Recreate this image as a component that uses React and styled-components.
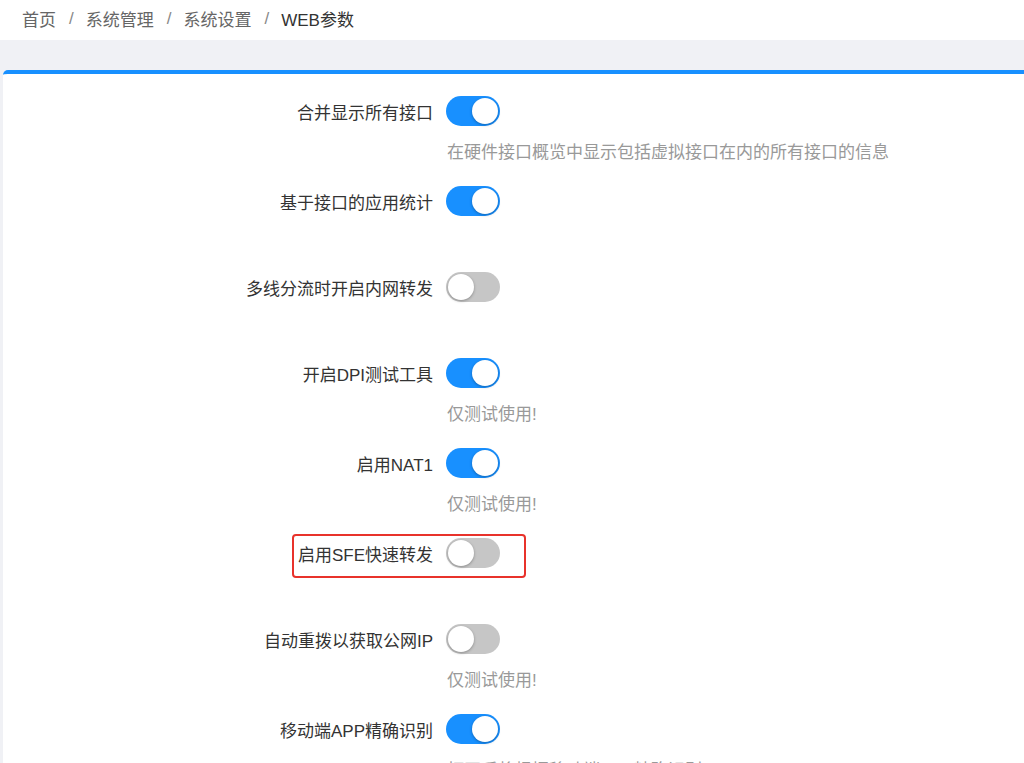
import React, { useState } from "react";
import styled, { createGlobalStyle } from "styled-components";

const GlobalStyle = createGlobalStyle`
  html, body {
    margin: 0;
    padding: 0;
    background: #f0f1f5;
    font-family: "Liberation Sans", "Noto Sans CJK SC", sans-serif;
    overflow: hidden;
  }
`;

const settings = [
    { label: "合并显示所有接口", on: true, hint: "在硬件接口概览中显示包括虚拟接口在内的所有接口的信息" },
    { label: "基于接口的应用统计", on: true },
    { label: "多线分流时开启内网转发", on: false },
    { label: "开启DPI测试工具", on: true, hint: "仅测试使用!" },
    { label: "启用NAT1", on: true, hint: "仅测试使用!" },
    { label: "启用SFE快速转发", on: false, marked: true },
    { label: "自动重拨以获取公网IP", on: false, hint: "仅测试使用!" },
    { label: "移动端APP精确识别", on: true, hint: "打开后将根据移动端APP精确识别" }
];

const crumbs = ["首页", "系统管理", "系统设置", "WEB参数"];

export default function App() {
    const [values, setValues] = useState(settings.map((s) => s.on));
    const toggle = (i) => setValues(values.map((v, j) => (j === i ? !v : v)));

    return (
        <Page>
            <GlobalStyle />
            <Breadcrumb>
                {crumbs.map((c, i) => (
                    <React.Fragment key={c}>
                        {i > 0 && <Sep>/</Sep>}
                        <Crumb last={i === crumbs.length - 1}>{c}</Crumb>
                    </React.Fragment>
                ))}
            </Breadcrumb>
            <Body>
                <Card>
                    {settings.map((s, i) => (
                        <Item key={s.label}>
                            <Control marked={s.marked}>
                                <Label>{s.label}</Label>
                                <Switch on={values[i]} onClick={() => toggle(i)}>
                                    <Knob on={values[i]} />
                                </Switch>
                            </Control>
                            {s.hint ? <Hint>{s.hint}</Hint> : <Spacer />}
                        </Item>
                    ))}
                </Card>
            </Body>
        </Page>
    );
}

const Page = styled.div`
    min-height: 763px;
    display: flex;
    flex-direction: column;
`;

const Breadcrumb = styled.div`
    height: 40px;
    background: #fff;
    display: flex;
    align-items: center;
    padding: 0 0 3px 22px;
    box-sizing: border-box;
    font-size: 17px;
    color: #666;
`;

const Crumb = styled.span`
    color: ${({ last }) => (last ? "#333" : "#666")};
`;

const Sep = styled.span`
    margin: 0 12px 0 13px;
    color: #888;
`;

const Body = styled.div`
    flex: 1;
    padding: 30px 0 0 3px;
    display: flex;
`;

const Card = styled.div`
    flex: 1;
    background: #fff;
    border-top: 4px solid #1890ff;
    border-radius: 5px 0 0 0;
    padding-top: 21px;
`;

const Item = styled.div`
    margin-bottom: 21px;
`;

const Control = styled.div`
    position: relative;
    height: 32px;
    display: flex;
    align-items: center;
    &::after {
        content: "";
        display: ${({ marked }) => (marked ? "block" : "none")};
        position: absolute;
        left: 289px;
        top: -3px;
        width: 234px;
        height: 44px;
        box-sizing: border-box;
        border: 2px solid #e8322b;
        border-radius: 4px;
        pointer-events: none;
    }
`;

const Label = styled.div`
    width: 443px;
    text-align: right;
    padding-right: 13px;
    box-sizing: border-box;
    font-size: 17px;
    color: #333;
`;

const Switch = styled.div`
    position: relative;
    width: 54px;
    height: 30px;
    border-radius: 15px;
    background: ${({ on }) => (on ? "#1890ff" : "#c6c6c6")};
    cursor: pointer;
    flex-shrink: 0;
`;

const Knob = styled.div`
    position: absolute;
    top: 2px;
    left: ${({ on }) => (on ? "26px" : "2px")};
    width: 26px;
    height: 26px;
    border-radius: 50%;
    background: #fff;
    box-shadow: 0 1px 3px rgba(0, 0, 0, 0.3);
`;

const Hint = styled.div`
    margin: 15px 0 0 444px;
    line-height: 22px;
    font-size: 17px;
    color: #999;
`;

const Spacer = styled.div`
    height: 33px;
`;
